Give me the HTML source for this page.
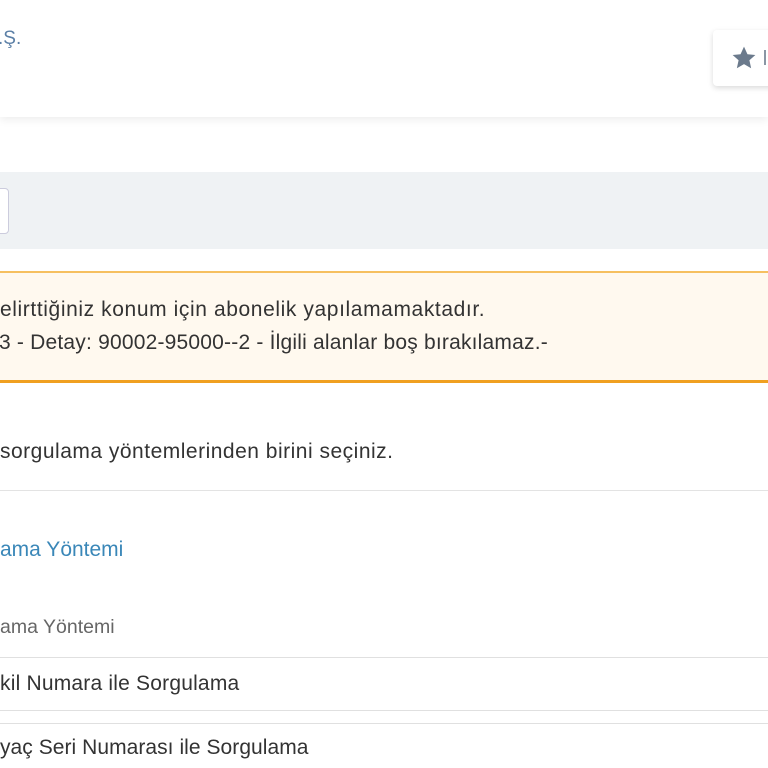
<!DOCTYPE html>
<html><head><meta charset="utf-8"><style>
*{margin:0;padding:0;box-sizing:border-box}
body{width:768px;height:768px;overflow:hidden;background:#fff;font-family:"Liberation Sans",sans-serif;color:#333;position:relative}
.abs{position:absolute;white-space:nowrap}
.t{font-size:21px;letter-spacing:0.3px}
</style></head><body>
<div class="abs" style="left:0;top:0;width:768px;height:117px;background:#fff;box-shadow:0 3px 8px rgba(0,0,0,0.07)"></div>
<div class="abs" style="left:-2px;top:28px;font-size:19px;color:#5b7fa6">.Ş.</div>
<div class="abs" style="left:713px;top:30px;width:70px;height:56px;background:#fff;border-radius:4px;box-shadow:0 2px 6px rgba(0,0,0,0.15)"></div>
<svg class="abs" style="left:731px;top:45px" width="26" height="26" viewBox="0 0 24 24"><path d="M12 1.5l3.2 7 7.3.7-5.5 4.9 1.6 7.4L12 17.7l-6.6 3.8 1.6-7.4L1.5 9.2l7.3-.7z" fill="#6b7a8c"/></svg>
<div class="abs" style="left:764px;top:50px;width:2px;height:15px;background:#8a96a4"></div>
<div class="abs" style="left:0;top:172px;width:768px;height:77px;background:#eff2f4"></div>
<div class="abs" style="left:-6px;top:188px;width:15px;height:46px;background:#fff;border:1px solid #ccd;border-radius:4px"></div>
<div class="abs" style="left:0;top:271px;width:768px;height:112px;background:#fff9ef;border-top:2px solid #f6c060;border-bottom:3px solid #f0a020"></div>
<div class="abs t" style="left:0;top:298px;letter-spacing:0.6px">elirttiğiniz konum için abonelik yapılamamaktadır.</div>
<div class="abs t" style="left:-1px;top:331px;letter-spacing:0.2px">3 - Detay: 90002-95000--2 - İlgili alanlar boş bırakılamaz.-</div>
<div class="abs t" style="left:0;top:440px;letter-spacing:0.5px">sorgulama yöntemlerinden birini seçiniz.</div>
<div class="abs" style="left:0;top:490px;width:768px;height:1px;background:#e3e3e3"></div>
<div class="abs" style="left:0;top:538px;font-size:21px;color:#3a87b8">ama Yöntemi</div>
<div class="abs" style="left:0;top:616px;font-size:19.5px;color:#666">ama Yöntemi</div>
<div class="abs" style="left:0;top:657px;width:768px;height:1px;background:#e0e0e0"></div>
<div class="abs t" style="left:0;top:672px;letter-spacing:0.2px">kil Numara ile Sorgulama</div>
<div class="abs" style="left:0;top:710px;width:768px;height:1px;background:#e0e0e0"></div>
<div class="abs" style="left:0;top:723px;width:768px;height:1px;background:#e0e0e0"></div>
<div class="abs t" style="left:0;top:736px;letter-spacing:0.05px">yaç Seri Numarası ile Sorgulama</div>
</body></html>
